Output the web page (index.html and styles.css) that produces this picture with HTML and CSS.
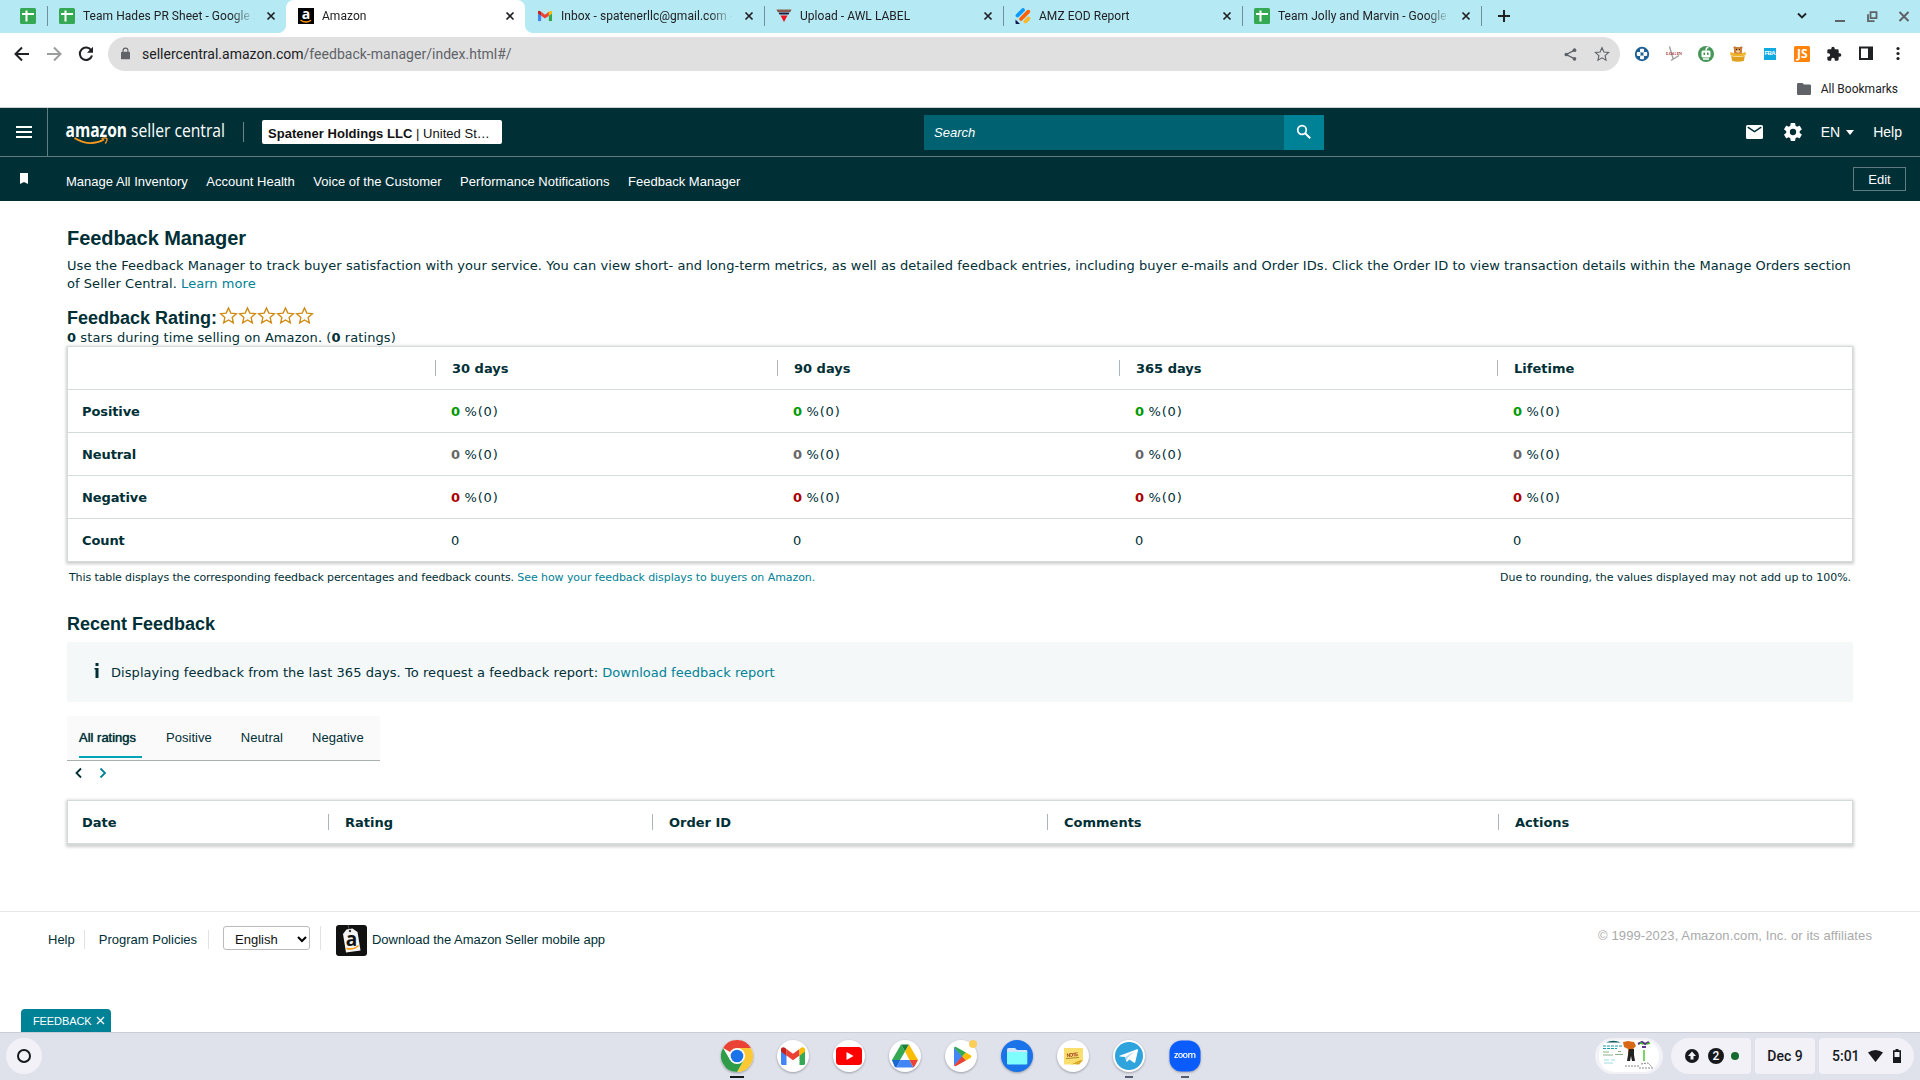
FILE: index.html
```html
<!DOCTYPE html>
<html lang="en">
<head>
    <meta charset="UTF-8">
    <title>Amazon</title>
    <link rel="stylesheet" href="styles.css">
</head>
<body>

<!-- shared icons -->
<svg class="defs" width="0" height="0">
    <symbol id="sheet" viewBox="0 0 16 16">
        <rect width="16" height="16" rx="1.5" fill="#34a853"/>
        <path d="M2 6h12M6.5 2.5v11" stroke="#fff" stroke-width="2" fill="none"/>
    </symbol>
    <symbol id="close" viewBox="0 0 10 10">
        <path d="M1.5 1.5l7 7M8.5 1.5l-7 7" stroke="currentColor" stroke-width="1.7" fill="none"/>
    </symbol>
    <symbol id="gmail" viewBox="0 0 24 18">
        <path d="M0 4v12.400a1.600 1.600 0 0 0 1.600 1.600H5.500V8z" fill="#4285f4"/>
        <path d="M24 4v12.400a1.600 1.600 0 0 1-1.600 1.600H18.500V8z" fill="#34a853"/>
        <path d="M5.500 2v6.500L12 13.300l6.500-4.800V2L12 6.800z" fill="#ea4335"/>
        <path d="M0 2.400v2.200l5.500 4.100V2L3.900.8C2.300-.4 0 .4 0 2.400z" fill="#c5221f"/>
        <path d="M24 2.400v2.200l-5.500 4.100V2L20.100.8C21.700-.4 24 .4 24 2.400z" fill="#fbbc04"/>
    </symbol>
    <symbol id="star" viewBox="0 0 24 24">
        <path d="M12 2.500l2.900 6.500 7 .7-5.300 4.700 1.500 6.900L12 17.700l-6.100 3.600 1.500-6.900L2.100 9.700l7-.7z" fill="none" stroke="currentColor" stroke-width="1.700"/>
    </symbol>
</svg>

<div class="tabstrip">
    <div class="pinned"><svg class="fav"><use href="#sheet"/></svg></div>
    <div class="tab sep before"><svg class="fav"><use href="#sheet"/></svg><span class="title">Team Hades PR Sheet - Google Sheets</span><svg class="x"><use href="#close"/></svg></div>
    <div class="tab active">
        <svg class="fav" viewBox="0 0 16 16"><rect width="16" height="16" fill="#000"/><text x="8" y="10.500" text-anchor="middle" class="fav-a">a</text><path d="M2.500 12q5.500 4 10.500.3" stroke="#f90" stroke-width="1.400" fill="none"/></svg>
        <span class="title">Amazon</span><svg class="x"><use href="#close"/></svg>
    </div>
    <div class="tab after"><svg class="fav" viewBox="-1 -3 18 18"><use href="#gmail" width="16" height="12"/></svg><span class="title">Inbox - spatenerllc@gmail.com - Gmail</span><svg class="x"><use href="#close"/></svg></div>
    <div class="tab sep">
        <svg class="fav" viewBox="0 0 16 16"><path d="M.5 1.500h15l-1 2.500H1.500z" fill="#8a5a50"/><path d="M2.500 4.500h11l-1 2h-9z" fill="#1d1a3c"/><path d="M4.500 7.500h7L8 14z" fill="#f01020"/></svg>
        <span class="title">Upload - AWL LABEL</span><svg class="x"><use href="#close"/></svg>
    </div>
    <div class="tab sep">
        <svg class="fav" viewBox="0 0 16 16"><g stroke-width="3.800" stroke-linecap="round" fill="none"><path d="M2.500 7.500L8 2" stroke="#0a9bff"/><path d="M6 11l7.300-7.300" stroke="#ff6100"/><path d="M10.500 13.500l3-3" stroke="#ffb629"/></g><path d="M.5 11.500l4.500 4.500H1.500a1 1 0 0 1-1-1z" fill="#0a1551"/></svg>
        <span class="title">AMZ EOD Report</span><svg class="x"><use href="#close"/></svg>
    </div>
    <div class="tab sep"><svg class="fav"><use href="#sheet"/></svg><span class="title">Team Jolly and Marvin - Google Sheets</span><svg class="x"><use href="#close"/></svg></div>
    <div class="newtab"><svg width="12" height="12" viewBox="0 0 12 12"><path d="M6 0v12M0 6h12" stroke="#202124" stroke-width="2"/></svg></div>
    <div class="winbtns">
        <svg width="12" height="12" viewBox="0 0 12 12"><path d="M2 3.500l4 4 4-4" stroke="#202124" stroke-width="1.800" fill="none"/></svg>
        <svg width="12" height="12" viewBox="0 0 12 12"><path d="M1 11h10" stroke="#5f6368" stroke-width="2"/></svg>
        <svg width="12" height="12" viewBox="0 0 12 12"><path d="M4 2h6v6H4zM1.500 4v7H8" transform="translate(.5 .2)" stroke="#5f6368" stroke-width="1.800" fill="none"/></svg>
        <svg width="12" height="12" viewBox="0 0 12 12"><path d="M1.500 2l9 9M10.500 2l-9 9" stroke="#5f6368" stroke-width="2" fill="none"/></svg>
    </div>
</div>

<div class="toolbar">
    <div class="navbtns">
        <svg viewBox="0 0 16 16"><path d="M15 8H2M8 1.500L1.500 8 8 14.500" stroke="#202124" stroke-width="2" fill="none"/></svg>
        <svg viewBox="0 0 16 16"><path d="M1 8h13M8 1.500L14.500 8 8 14.500" stroke="#9a9c9e" stroke-width="2" fill="none"/></svg>
        <svg viewBox="0 0 16 16"><path d="M13.300 4.500A6.200 6.200 0 1 0 14 9.500" stroke="#202124" stroke-width="2" fill="none"/><path d="M15 .8v6H9z" fill="#202124"/></svg>
    </div>
    <div class="omnibox">
        <svg class="lock" viewBox="0 0 10 13"><rect y="4.500" width="10" height="8.500" rx="1" fill="#5f6368"/><path d="M2.300 5V3.300a2.700 2.700 0 0 1 5.400 0V5" stroke="#5f6368" stroke-width="1.300" fill="none"/></svg>
        <span class="url">sellercentral.amazon.com<span>/feedback-manager/index.html#/</span></span>
        <svg class="share" viewBox="0 0 14 14"><path d="M11.500 2.300L2.500 7l9 4.700" stroke="#5f6368" stroke-width="1.500" fill="none"/><circle cx="11.300" cy="2.400" r="2" fill="#5f6368"/><circle cx="2.500" cy="7" r="2" fill="#5f6368"/><circle cx="11.300" cy="11.600" r="2" fill="#5f6368"/></svg>
        <svg class="fave"><use href="#star"/></svg>
    </div>
    <div class="exts">
        <svg viewBox="0 0 16 16"><circle cx="8" cy="8" r="7.200" fill="#1d6096"/><g fill="#fff"><rect x="6" y="2.800" width="4" height="3.800" rx="1"/><rect x="6" y="9.400" width="4" height="3.800" rx="1"/><rect x="2.800" y="6" width="3.800" height="4" rx="1"/><rect x="9.400" y="6" width="3.800" height="4" rx="1"/></g></svg>
        <svg viewBox="0 0 16 16"><path d="M3.500.5l3.500 12M5 14.500l8-5" stroke="#999" stroke-width="1.300"/><text x="0" y="8.500" class="login" textLength="16">LOG IN</text></svg>
        <svg viewBox="0 0 16 16"><circle cx="8" cy="8" r="8" fill="#46965a"/><path d="M8 4.500q0-3 2.500-3.500" stroke="#fff" stroke-width="1.300" fill="none"/><rect x="3.500" y="4.500" width="9" height="7" rx="1.500" fill="#fff"/><path d="M5.500 6.500h1.600v2.500H5.500zM9 6.500h1.600v2.500H9z" fill="#46965a"/><path d="M5 13h6" stroke="#fff" stroke-width="1.500"/></svg>
        <svg viewBox="0 0 16 16"><circle cx="4.800" cy="1.800" r="1.300" fill="#b8692c"/><circle cx="11.200" cy="1.800" r="1.300" fill="#b8692c"/><rect x="4" y="1" width="8" height="8" rx="2.500" fill="#c9803a"/><path d="M6 3.500h1M9 3.500h1" stroke="#402010"/><ellipse cx="8" cy="5.500" rx="1.800" ry="1.300" fill="#f0d3a4"/><path d="M.3 6q7.700 3.500 15.400 0v3.300q-7.700 2.500-15.400 0z" fill="#f0b428"/><path d="M1.200 10q6.800 2 13.600 0l-1 5q-5.800 1.600-11.600 0z" fill="#e0a020"/></svg>
        <svg viewBox="0 0 16 16"><rect x="2" y="2" width="12" height="12" fill="#10a9e0"/><text x="2.500" y="9.300" class="fba" textLength="11">FBA</text></svg>
        <svg viewBox="0 0 16 16"><rect width="16" height="16" rx="1.500" fill="#ff830c"/><text x="8.300" y="12.300" text-anchor="middle" class="js">JS</text></svg>
        <svg viewBox="0 0 24 24"><path d="M20.500 11H19V7a2 2 0 0 0-2-2h-4V3.500a2.500 2.500 0 0 0-5 0V5H4a2 2 0 0 0-2 2v3.800h1.500a2.700 2.700 0 0 1 0 5.400H2V20a2 2 0 0 0 2 2h3.800v-1.500a2.700 2.700 0 0 1 5.400 0V22H17a2 2 0 0 0 2-2v-4h1.500a2.500 2.500 0 0 0 0-5z" fill="#202124"/></svg>
        <svg viewBox="0 0 16 16"><path d="M1 .5h14v13.500H1zM3 2.500v9.500h7V2.500z" fill="#202124" fill-rule="evenodd"/></svg>
        <svg viewBox="0 0 16 16"><g fill="#202124"><circle cx="8" cy="2.500" r="1.600"/><circle cx="8" cy="7.500" r="1.600"/><circle cx="8" cy="12.500" r="1.600"/></g></svg>
    </div>
</div>

<div class="bookmarks">
    <svg width="14" height="12" viewBox="0 0 14 12"><path d="M1.300 0H5.500L7 1.500h5.700A1.300 1.300 0 0 1 14 2.800v7.900a1.300 1.300 0 0 1-1.300 1.300H1.300A1.300 1.300 0 0 1 0 10.700V1.300A1.300 1.300 0 0 1 1.300 0z" fill="#5f6368"/></svg>
    <span>All Bookmarks</span>
</div>

<header class="header">
    <div class="burger"><i></i><i></i><i></i></div>
    <svg class="logo" width="162" height="28" viewBox="0 0 162 28">
        <text x="-.5" y="16.500" class="logo-a" textLength="61.500" lengthAdjust="spacingAndGlyphs">amazon</text>
        <text x="65" y="16.500" class="logo-s" textLength="94" lengthAdjust="spacingAndGlyphs">seller central</text>
        <path d="M8.500 18Q24 27.500 38 19.500" stroke="#f7981d" stroke-width="1.900" fill="none"/>
        <path d="M35.500 18.700q4-1.500 5.200-.2t-1.500 5" stroke="#f7981d" stroke-width="1.300" fill="none"/>
    </svg>
    <div class="account"><b>Spatener Holdings LLC</b> | United St…</div>
    <div class="search"><span>Search</span>
        <div class="searchbtn"><svg width="16" height="16" viewBox="0 0 16 16"><circle cx="6" cy="6" r="4.300" stroke="#fff" stroke-width="1.700" fill="none"/><path d="M9.200 9.200l5 5" stroke="#fff" stroke-width="2"/></svg></div>
    </div>
    <div class="tools">
        <svg class="mail" viewBox="0 0 17 14"><rect width="17" height="14" rx="1.500" fill="#fff"/><path d="M1.700 2.200l6.800 4.500 6.800-4.500" stroke="#002f36" stroke-width="1.500" fill="none"/></svg>
        <svg class="gear" viewBox="2 2 20 20"><path d="M19.400 13c0-.3.100-.6.100-1s0-.7-.1-1l2.100-1.600c.2-.2.200-.4.100-.6l-2-3.500c-.1-.2-.3-.3-.6-.2l-2.500 1c-.5-.4-1.100-.7-1.700-1l-.4-2.600c0-.3-.2-.5-.5-.5h-4c-.3 0-.5.200-.5.500L9 5.100c-.6.300-1.200.6-1.700 1l-2.500-1c-.2-.1-.5 0-.6.200l-2 3.500c-.1.200-.1.400.1.600L4.500 11c0 .3-.1.600-.1 1s0 .7.100 1l-2.200 1.600c-.2.200-.2.400-.1.600l2 3.500c.1.200.3.300.6.200l2.500-1c.5.400 1.100.7 1.700 1l.4 2.600c0 .3.200.5.500.5h4c.3 0 .5-.2.500-.5l.4-2.600c.6-.3 1.200-.6 1.700-1l2.500 1c.2.100.5 0 .6-.2l2-3.500c.1-.2.100-.4-.1-.6zM12 15.500a3.500 3.500 0 1 1 0-7 3.500 3.500 0 0 1 0 7z" fill="#fff"/></svg>
        <span class="lang">EN</span><i class="caret"></i>
        <span>Help</span>
    </div>
</header>

<nav class="favbar">
    <svg class="bm" width="8" height="11" viewBox="0 0 8 11"><path d="M0 0h8v11L4 9 0 11z" fill="#fff"/></svg>
    <a>Manage All Inventory</a><a>Account Health</a><a>Voice of the Customer</a><a>Performance Notifications</a><a>Feedback Manager</a>
    <button class="edit">Edit</button>
</nav>

<main class="main">
    <h1>Feedback Manager</h1>
    <p class="intro">Use the Feedback Manager to track buyer satisfaction with your service. You can view short- and long-term metrics, as well as detailed feedback entries, including buyer e-mails and Order IDs. Click the Order ID to view transaction details within the Manage Orders section of Seller Central. <a>Learn more</a></p>

    <div class="rating">
        <h2>Feedback Rating:</h2>
        <svg><use href="#star"/></svg><svg><use href="#star"/></svg><svg><use href="#star"/></svg><svg><use href="#star"/></svg><svg><use href="#star"/></svg>
    </div>
    <div class="summary"><b>0</b> stars during time selling on Amazon. (<b>0</b> ratings)</div>

    <div class="grid metrics">
        <div class="row head"><span></span><span>30 days</span><span>90 days</span><span>365 days</span><span>Lifetime</span></div>
        <div class="row pos"><b>Positive</b><span><b>0</b> %(0)</span><span><b>0</b> %(0)</span><span><b>0</b> %(0)</span><span><b>0</b> %(0)</span></div>
        <div class="row neu"><b>Neutral</b><span><b>0</b> %(0)</span><span><b>0</b> %(0)</span><span><b>0</b> %(0)</span><span><b>0</b> %(0)</span></div>
        <div class="row neg"><b>Negative</b><span><b>0</b> %(0)</span><span><b>0</b> %(0)</span><span><b>0</b> %(0)</span><span><b>0</b> %(0)</span></div>
        <div class="row"><b>Count</b><span>0</span><span>0</span><span>0</span><span>0</span></div>
    </div>
    <div class="notes">
        <span>This table displays the corresponding feedback percentages and feedback counts. <a>See how your feedback displays to buyers on Amazon.</a></span>
        <span class="rounding">Due to rounding, the values displayed may not add up to 100%.</span>
    </div>

    <h2 class="recent">Recent Feedback</h2>
    <div class="info">
        <svg width="5" height="15" viewBox="0 0 5 15"><path d="M1.500 0h3v3h-3zM.5 5h4v10h-3V6.500h-1z" fill="#002f36"/></svg>
        <span>Displaying feedback from the last 365 days. To request a feedback report: <a>Download feedback report</a></span>
    </div>
    <div class="filters"><span class="on">All ratings</span><span>Positive</span><span>Neutral</span><span>Negative</span></div>
    <div class="pager">
        <svg width="8" height="12" viewBox="0 0 8 12"><path d="M6 1.500L1.500 6 6 10.500" stroke="#002f36" stroke-width="1.800" fill="none"/></svg>
        <svg width="8" height="12" viewBox="0 0 8 12"><path d="M1.500 1.500L6 6l-4.500 4.500" stroke="#008296" stroke-width="1.800" fill="none"/></svg>
    </div>
    <div class="grid feedback">
        <div class="row head"><span>Date</span><span>Rating</span><span>Order ID</span><span>Comments</span><span>Actions</span></div>
    </div>
</main>

<footer class="footer">
    <a class="fl">Help</a><a class="fl policies">Program Policies</a>
    <div class="langbox"><div class="select"><span>English</span><svg width="10" height="7" viewBox="0 0 10 7"><path d="M1 1l4 4 4-4" stroke="#000" stroke-width="2" fill="none"/></svg></div></div>
    <svg class="app" width="31" height="31" viewBox="0 0 31 31"><rect width="31" height="31" rx="3" fill="#111"/><path d="M12 0l1.500 6" stroke="#555"/><path d="M7 9l3.500-4.500 6-1L21.500 7l3 18.500-14.500 2z" fill="#f4f4f4"/><circle cx="14" cy="6" r="1.200" fill="#333"/><text x="15.500" y="20.500" text-anchor="middle" class="app-a">a</text><path d="M10.500 23.500q7 1.800 12-3" stroke="#f90" stroke-width="1.500" fill="none"/></svg>
    <a class="dl">Download the Amazon Seller mobile app</a>
    <span class="copy">© 1999-2023, Amazon.com, Inc. or its affiliates</span>
</footer>

<div class="fbtab"><span>FEEDBACK</span><svg width="9" height="9" viewBox="0 0 9 9"><path d="M1 1l7 7M8 1L1 8" stroke="#fff" stroke-width="1.300"/></svg></div>

<div class="shelf">
    <div class="launcher"><i></i></div>
    <div class="apps">
        <div class="appicon run focus"><svg viewBox="0 0 32 32"><circle cx="16" cy="16" r="16" fill="#fff"/><path d="M16 16L2.140 8A16 16 0 0 1 29.860 8z" fill="#ea4335"/><path d="M16 8h13.860A16 16 0 0 1 16 32L22.900 20z" fill="#fbc934"/><path d="M2.140 8A16 16 0 0 0 16 32l6.900-12H9.100z" fill="#2f9c4a"/><circle cx="16" cy="16" r="8" fill="#fff"/><circle cx="16" cy="16" r="6.300" fill="#1a73e8"/></svg></div>
        <div class="appicon"><svg viewBox="0 0 32 32"><circle cx="16" cy="16" r="16" fill="#fff"/><use href="#gmail" x="4" y="7" width="24" height="18"/></svg></div>
        <div class="appicon"><svg viewBox="0 0 32 32"><circle cx="16" cy="16" r="16" fill="#fff"/><rect x="3" y="7" width="26" height="18" rx="3.500" fill="#f00"/><path d="M13.500 12l7 4-7 4z" fill="#fff"/></svg></div>
        <div class="appicon"><svg viewBox="0 0 32 32"><circle cx="16" cy="16" r="16" fill="#fff"/><path d="M12 4.500h8L16 11.500z" fill="#188038"/><path d="M12 4.500L3 20l4 7L16 11.500z" fill="#34a853"/><path d="M20 4.500L29 20h-8.500L16 11.500z" fill="#fbbc04"/><path d="M3 20h8.500l-4 7.500q-1.500 0-2-1z" fill="#1967d2"/><path d="M11.500 20h9l4 7.500h-17z" fill="#4285f4"/><path d="M20.500 20H29l-3.500 6.500-1 1z" fill="#ea4335"/></svg></div>
        <div class="appicon dot"><svg viewBox="0 0 32 32"><circle cx="16" cy="16" r="16" fill="#fff"/><path d="M9 7.500v18L18 16.500z" fill="#4285f4"/><path d="M9 7.500q1-1.500 3 0l9 5-4 4z" fill="#34a853"/><path d="M21 12.500l5 3q1 1 0 2l-5 3-4-4z" fill="#fbbc04"/><path d="M9 25.500q1 1.500 3 0l9-5-4-4z" fill="#ea4335"/></svg></div>
        <div class="appicon"><svg viewBox="0 0 32 32"><circle cx="16" cy="16" r="16" fill="#1a73e8"/><path d="M6 9.500A1.500 1.500 0 0 1 7.500 8H14l2 2h9a1.300 1.300 0 0 1 1.300 1.300V13H6z" fill="#d2e3fc"/><rect x="6" y="12" width="20.300" height="12.500" rx="1" fill="#7ffcfc"/></svg></div>
        <div class="appicon"><svg viewBox="0 0 32 32"><circle cx="16" cy="16" r="16" fill="#fff"/><path d="M7 8h19v12l-4 4.500H7z" fill="#fbdf6e"/><path d="M26 20l-4 4.500q-6-1-8 0 6-3 8-4z" fill="#d9a92c"/><path d="M9 18.500l13-1" stroke="#a7842e"/><text x="9.500" y="16.500" class="note" transform="rotate(-5 15 15)" textLength="12">NOTE</text></svg></div>
        <div class="appicon run"><svg viewBox="0 0 32 32"><circle cx="16" cy="16" r="16" fill="#fff"/><circle cx="16" cy="16" r="14" fill="#2fa3dc"/><path d="M6.500 15.700L24 9.200q1.300-.3 1 1.200L22.300 22q-.4 1.300-1.600.6l-4.300-3.100-2.200 2.100q-.8.500-1-.4l-1-4.200-5.500-.6q-.8-.3-.2-.7z" fill="#fff"/><path d="M12.200 17l8.500-5.200-6.200 6.500-.8 3z" fill="#b5d9ef"/></svg></div>
        <div class="appicon run"><svg viewBox="0 0 32 32"><rect x=".5" y=".5" width="31" height="31" rx="12" fill="#0b5cff"/><text x="5" y="18" class="zoomtxt" textLength="22">zoom</text></svg></div>
    </div>
    <div class="tray">
        <div class="thumbs"><svg width="60" height="32" viewBox="0 0 60 32">
            <rect width="60" height="32" rx="15" fill="#fff"/><path d="M7 2.500Q14-1 22 2.500z" fill="#0e5a63"/><path d="M4 6h20M4 8.500h14" stroke="#1a9ab0" stroke-width="1.200" stroke-dasharray="3 1"/><path d="M4 12h6M4 15h10M16 14.500h8M19 11.500h3" stroke="#8fae8a"/><path d="M5 20h5M12 20h4M5 23h9" stroke="#9ddbe4"/>
            <path d="M24 2l5-1 6 1 2 4-3 3v6h-5V9l-4-2z" fill="#d86a17"/><path d="M30 9h5v6l1 6h-3l-1-5-1 5h-3z" fill="#222"/><path d="M39 4l4-2 3 2 4-2M43 7h4" stroke="#5a3a86" stroke-width="2.200" fill="none"/><path d="M41 3l3 1M48 4l3-1M45 10v11" stroke="#3fc41e" stroke-width="1.400"/><path d="M26 26h14M42 24l7-1 4 4M40 28h14" stroke="#888" stroke-dasharray="2 1" fill="none"/>
        </svg></div>
        <div class="pill first">
            <svg width="14" height="14" viewBox="0 0 14 14"><circle cx="7" cy="7" r="7" fill="#17191d"/><path d="M7 2.500L11 7H8.500v3.500h-3V7H3z" fill="#f2f2f8"/></svg>
            <span class="count">2</span><i class="green"></i>
        </div>
        <div class="pill date">Dec 9</div>
        <div class="pill last"><span>5:01</span>
            <svg class="wifi" width="15" height="12" viewBox="0 0 15 12"><path d="M0 2.500Q7.500-2.500 15 2.500L7.500 12z" fill="#17191d"/></svg>
            <svg width="8" height="14" viewBox="0 0 8 14"><path d="M2.500 0h3v1.300H8V14H0V1.300h2.500zM1.500 3v5h5V3z" fill="#17191d" fill-rule="evenodd"/></svg>
        </div>
    </div>
</div>

</body>
</html>
```
FILE: styles.css
```css
* {
    box-sizing: border-box;
}
body {
    margin: 0;
    width: 1920px;
    height: 1080px;
    overflow: hidden;
    position: relative;
    display: flex;
    flex-direction: column;
    background: #fff;
    color: #002f36;
    font-family: "Liberation Sans", Arial, sans-serif;
    font-size: 13px;
}
svg {
    display: block;
    flex: none;
}
.defs {
    position: absolute;
}
a {
    color: inherit;
    text-decoration: none;
}

/* browser tabs */
.tabstrip {
    display: flex;
    flex: none;
    height: 33px;
    background: #b5e9f3;
    color: #202124;
    font-family: Roboto, sans-serif;
    font-size: 12px;
    letter-spacing: 0.04px;
}
.pinned {
    width: 47px;
    padding: 8px 0 0 20px;
}
.fav {
    width: 16px;
    height: 16px;
}
.tab {
    width: 239px;
    height: 33px;
    display: flex;
    align-items: center;
    padding: 0 10px 1px 12px;
}
.tab.sep {
    background: linear-gradient(#6f9199, #6f9199) 0 6px / 1px 20px no-repeat;
}
.tab.active {
    background: #fff;
    border-radius: 8px 8px 0 0;
}
/* the active tab flares out into its neighbours */
.tab.before {
    background: linear-gradient(#6f9199, #6f9199) 0 6px / 1px 20px no-repeat,
        radial-gradient(circle at 0 0, #b5e9f3 7.5px, #fff 8.5px) 100% 100% / 8px 8px no-repeat;
}
.tab.after {
    background: radial-gradient(circle at 100% 0, #b5e9f3 7.5px, #fff 8.5px) 0 100% / 8px 8px no-repeat;
}
.title {
    width: 173px;
    margin: 0 10px 0 8px;
    white-space: nowrap;
    overflow: hidden;
    -webkit-mask-image: linear-gradient(90deg, #000 148px, transparent 172px);
    mask-image: linear-gradient(90deg, #000 148px, transparent 172px);
}
.x {
    width: 10px;
    height: 10px;
}
.newtab {
    width: 60px;
    padding: 10px 0 0 17px;
    background: linear-gradient(#6f9199, #6f9199) 0 6px / 1px 20px no-repeat;
}
.winbtns {
    display: flex;
    gap: 20px;
    margin-left: auto;
    padding: 10px 10px 0 0;
}
.winbtns svg:first-child {
    margin-right: 6px;
}
.fav-a {
    font: bold 14px "Open Sans", sans-serif;
    fill: #fff;
}

/* toolbar */
.toolbar {
    display: flex;
    flex: none;
    align-items: center;
    height: 38px;
    padding-top: 4px;
    font-family: Roboto, sans-serif;
}
.navbtns {
    display: flex;
    gap: 16px;
    width: 108px;
    padding-left: 14px;
}
.navbtns svg {
    width: 16px;
    height: 16px;
}
.omnibox {
    display: flex;
    align-items: center;
    width: 1512px;
    height: 34px;
    padding: 0 10px 0 13px;
    border-radius: 17px;
    background: #e0e0e0;
}
.lock {
    width: 9px;
    height: 13px;
    margin-bottom: 2px;
}
.url {
    flex: 1;
    margin-left: 12px;
    font-size: 14px;
    letter-spacing: 0.02px;
    color: #202124;
}
.url span {
    color: #5f6368;
}
.share {
    width: 13px;
    height: 13px;
    margin-right: 17px;
}
.fave {
    width: 16px;
    height: 16px;
    color: #5f6368;
}
.exts {
    display: flex;
    gap: 16px;
    margin-left: 14px;
}
.exts svg {
    width: 16px;
    height: 16px;
}
.login {
    font: bold 5px "Liberation Serif", serif;
    fill: #a33;
}
.fba {
    font: bold 6px "Liberation Sans", sans-serif;
    fill: #fff;
}
.js {
    font: bold 12px "Open Sans", sans-serif;
    fill: #fff;
}

.bookmarks {
    display: flex;
    flex: none;
    justify-content: flex-end;
    align-items: center;
    gap: 10px;
    height: 37px;
    padding: 0 22px 1px 0;
    border-bottom: 1px solid #d0d3d4;
    color: #202124;
    font: 12px Roboto, sans-serif;
}

/* seller central header */
.header {
    display: flex;
    flex: none;
    height: 49px;
    background: #002f36;
    border-bottom: 1px solid #5f7c7f;
    color: #fff;
}
.burger {
    width: 48px;
    padding: 18px 0 0 16px;
    border-right: 1px solid #5f7c7f;
}
.burger i {
    display: block;
    width: 16px;
    height: 2px;
    margin-bottom: 3px;
    background: #fff;
}
.logo {
    margin: 12px 0 0 18px;
    overflow: visible;
}
.logo-a {
    font: bold 20px "Open Sans", sans-serif;
    fill: #fff;
}
.logo-s {
    font: 18.5px "Open Sans", sans-serif;
    fill: #fff;
}
.account {
    width: 240px;
    height: 24px;
    margin: 12px 0 0 34px;
    padding-left: 6px;
    line-height: 27px;
    background: #fff;
    border-radius: 2px;
    color: #111;
    font-size: 13px;
    letter-spacing: 0.03px;
    position: relative;
    white-space: nowrap;
}
.account::before {
    content: "";
    position: absolute;
    left: -19px;
    top: 2px;
    width: 1px;
    height: 20px;
    background: #6d8588;
}
.search {
    display: flex;
    justify-content: space-between;
    width: 400px;
    height: 35px;
    margin: 7px 0 0 422px;
    padding-left: 10px;
    background: #006170;
    line-height: 35px;
    font-style: italic;
}
.searchbtn {
    width: 40px;
    padding: 9px 0 0 12px;
    background: #008296;
}
.tools {
    display: flex;
    align-items: center;
    margin-left: auto;
    padding-right: 18px;
    font-size: 14px;
}
.mail {
    width: 17px;
    height: 14px;
    margin-right: 21px;
}
.gear {
    width: 18px;
    height: 18px;
    margin-right: 19px;
}
.caret {
    margin: 0 19px 0 6px;
    border: 4px solid transparent;
    border-top: 5px solid #fff;
    border-bottom: 0;
}

.favbar {
    display: flex;
    flex: none;
    height: 44px;
    padding: 15px 14px 0 20px;
    background: #002f36;
    color: #fff;
    font-size: 13px;
    letter-spacing: 0.02px;
    line-height: 20px;
}
.bm {
    margin: 1px 38px 0 0;
}
.favbar a {
    margin-right: 18.500px;
}
.edit {
    width: 53px;
    height: 24px;
    margin: -5px 0 0 auto;
    padding: 0;
    border: 1px solid #5f7c7f;
    background: none;
    color: #fff;
    font: 13px "Liberation Sans", sans-serif;
}

/* page content */
.main {
    flex: none;
    height: 710px;
    padding: 25px 67px 0;
    font-family: "DejaVu Sans", Verdana, sans-serif;
}
.main a {
    color: #008296;
}
h1, h2 {
    margin: 0;
    font-family: "Liberation Sans", sans-serif;
    font-weight: bold;
}
h1 {
    font-size: 20px;
    line-height: 24px;
    letter-spacing: -0.07px;
}
h2 {
    font-size: 18px;
    line-height: 24px;
}
.intro {
    margin: 7px -4px 13px 0;
    line-height: 18px;
    letter-spacing: 0.045px;
}
.rating {
    display: flex;
    height: 24px;
}
.rating svg {
    width: 19px;
    height: 19px;
    color: #cf8a10;
}
.rating h2 {
    margin-right: 2px;
}
.summary {
    line-height: 16px;
    letter-spacing: 0.08px;
}
.grid {
    border: 1px solid #d5dbdb;
    box-shadow: 0 1px 3px 1px rgba(0, 0, 0, 0.2);
}
.row {
    display: grid;
    height: 43px;
    align-items: center;
    border-top: 1px solid #d5dbdb;
}
.row:first-child {
    height: 42px;
    border-top: 0;
}
.row > :first-child {
    padding-left: 14px;
}
.metrics .row {
    grid-template-columns: 367px 342px 342px 378px 1fr;
}
.metrics .row > :first-child {
    letter-spacing: -0.1px;
}
.metrics .row > :not(:first-child) {
    padding-left: 16px;
}
.metrics .pos span, .metrics .neu span, .metrics .neg span {
    letter-spacing: 0.8px;
}
.metrics span b {
    letter-spacing: -0.4px;
}
.feedback .row {
    grid-template-columns: 260px 324px 395px 451px 1fr;
}
.feedback .row:first-child {
    height: 43px;
    border-bottom: 1px solid #d5dbdb;
}
.row.head {
    font-weight: bold;
    line-height: 20px;
}
.grid .row.head span:not(:first-child) {
    padding-left: 17px;
    background: linear-gradient(#a9b5b8, #a9b5b8) 0 1px / 1px 16px no-repeat;
}
.pos span b {
    color: #090;
}
.neu span b {
    color: #666;
}
.neg span b {
    color: #a00;
}
.row.head span {
    height: 18px;
}
.notes {
    display: flex;
    justify-content: space-between;
    padding: 9px 2px 0;
    font-size: 11px;
    line-height: 14px;
    letter-spacing: -0.11px;
}
.notes a {
    letter-spacing: -0.07px;
}
.notes .rounding {
    letter-spacing: -0.04px;
}
.recent {
    margin-top: 27px;
}
.info {
    display: flex;
    height: 60px;
    margin-top: 6px;
    padding: 21px 0 0 27px;
    background: #f4f8f9;
    line-height: 20px;
    letter-spacing: 0.06px;
}
.info a {
    letter-spacing: 0;
}
.info span {
    margin-left: 12px;
}
.filters {
    display: flex;
    gap: 29px;
    width: 313px;
    height: 45px;
    margin-top: 14px;
    padding: 0 12px;
    background: #fafafa;
    border-bottom: 1px solid #aab0b0;
    font-family: "Liberation Sans", sans-serif;
    letter-spacing: 0.04px;
    line-height: 43px;
}
.filters .on {
    width: 63px;
    height: 42px;
    margin-right: -5px;
    border-bottom: 2px solid #00a4b4;
    letter-spacing: 0;
    text-shadow: 0 0 1px #002f36;
}
.pager {
    display: flex;
    gap: 16px;
    padding: 6px 8px 0;
}
.feedback {
    margin-top: 21px;
}

/* footer */
.footer {
    display: flex;
    height: 121px;
    border-top: 1px solid #e7e9e9;
    padding: 14px 48px 0;
    line-height: 27px;
}
.fl {
    height: 19px;
    margin-top: 4px;
    padding-right: 9px;
    border-right: 1px solid #e0e3e3;
    line-height: 19px;
}
.policies {
    padding: 0 11px 0 14px;
}
.langbox {
    height: 24px;
    padding: 0 10px 0 14px;
    border-right: 1px solid #e0e3e3;
}
.select {
    display: flex;
    justify-content: space-between;
    width: 87px;
    height: 24px;
    padding: 0 2px 0 11px;
    border: 1px solid #bbb;
    border-radius: 3px;
    line-height: 26px;
    color: #111;
}
.select svg {
    margin-top: 9px;
}
.app {
    margin: -1px 5px 0 15px;
}
.app-a {
    font: bold 19px "Open Sans", sans-serif;
    fill: #111;
}
.dl {
    letter-spacing: -0.03px;
}
.copy {
    margin-left: auto;
    line-height: 20px;
    letter-spacing: 0.11px;
    color: #aaa;
}
.fbtab {
    position: absolute;
    left: 21px;
    top: 1009px;
    display: flex;
    align-items: center;
    gap: 4px;
    width: 90px;
    height: 23px;
    padding-left: 12px;
    border-radius: 4px 4px 0 0;
    background: #008296;
    color: #fff;
    font-size: 11px;
    letter-spacing: -0.1px;
}

/* shelf */
.shelf {
    position: relative;
    flex: none;
    display: flex;
    height: 48px;
    border-top: 1px solid #c9ccd4;
    background: #dfe1eb;
    font-family: Roboto, sans-serif;
}
.launcher {
    width: 36px;
    height: 36px;
    margin: 5px 0 0 6px;
    padding: 11px;
    border-radius: 50%;
    background: #f1f1f7;
}
.launcher i {
    display: block;
    width: 14px;
    height: 14px;
    border: 2px solid #17191d;
    border-radius: 50%;
}
.apps {
    display: flex;
    gap: 24px;
    margin: 7px 0 0 678.500px;
}
.appicon {
    position: relative;
    width: 32px;
    height: 32px;
}
.appicon svg {
    filter: drop-shadow(0 1px 1px rgba(0, 0, 0, 0.3));
}
.run::after {
    content: "";
    position: absolute;
    left: 12px;
    top: 36px;
    width: 8px;
    height: 2px;
    background: #565c70;
}
.focus::after {
    left: 9px;
    width: 14px;
    background: #17191d;
}
.dot::after {
    content: "";
    position: absolute;
    left: 24px;
    top: 0;
    width: 8px;
    height: 8px;
    border-radius: 50%;
    background: #fbce5a;
}
.note {
    font: bold 5px "Liberation Sans", sans-serif;
    fill: #9c3b22;
}
.zoomtxt {
    font: 600 9px "Open Sans", sans-serif;
    fill: #fff;
}
.tray {
    display: flex;
    margin: 5px 6px 0 auto;
    font-size: 14px;
    font-weight: 500;
    line-height: 36px;
    color: #17191d;
}
.thumbs {
    width: 68px;
    height: 36px;
    margin-right: 8px;
    padding: 2px 4px;
    border-radius: 18px;
    background: #f1f1f7;
}
.pill {
    display: flex;
    align-items: center;
    height: 36px;
    margin-right: 4px;
    border-radius: 4px;
    background: #f1f1f7;
}
.first {
    width: 80px;
    padding-left: 14px;
    border-radius: 18px 4px 4px 18px;
}
.count {
    width: 16px;
    height: 16px;
    margin: 0 7px 0 9px;
    border-radius: 50%;
    background: #17191d;
    color: #fff;
    font-size: 12px;
    line-height: 16px;
    text-align: center;
}
.green {
    width: 8px;
    height: 8px;
    border-radius: 50%;
    background: #146c2e;
}
.date {
    width: 60px;
    justify-content: center;
}
.last {
    width: 95px;
    margin: 0;
    padding-left: 13px;
    border-radius: 4px 18px 18px 4px;
}
.wifi {
    margin: 0 10px 0 8px;
}
```
